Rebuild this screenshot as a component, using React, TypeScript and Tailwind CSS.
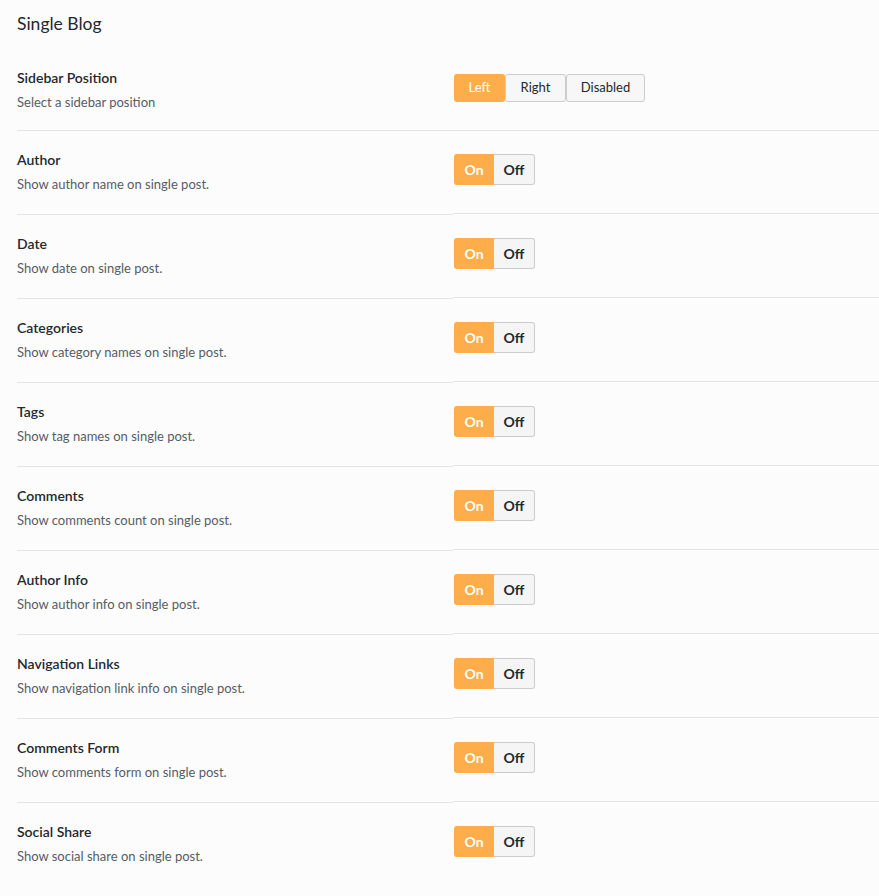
import React from "react";

const rows = [
  ["Author", "Show author name on single post."],
  ["Date", "Show date on single post."],
  ["Categories", "Show category names on single post."],
  ["Tags", "Show tag names on single post."],
  ["Comments", "Show comments count on single post."],
  ["Author Info", "Show author info on single post."],
  ["Navigation Links", "Show navigation link info on single post."],
  ["Comments Form", "Show comments form on single post."],
  ["Social Share", "Show social share on single post."],
];

function Label({ title, desc, last, first }: { title: string; desc: string; last?: boolean; first?: boolean }) {
  return (
    <div className={`w-[436px] ${first ? "h-[83px] pt-[20px]" : "h-[84px] pt-[19px]"} ${last ? "" : "border-b border-[#e5e5e5]"}`}>
      <div className="text-[14px] leading-[20px] font-semibold text-[#23282d]">{title}</div>
      <div className="text-[13px] leading-[20px] mt-[4px] text-[#555d66]">{desc}</div>
    </div>
  );
}

function Toggle() {
  return (
    <div className="flex h-[31px] text-[14px] font-bold">
      <div className="w-[40px] flex items-center justify-center bg-[#fdae4b] text-white rounded-l-[3px]">On</div>
      <div className="w-[41px] flex items-center justify-center bg-[#f5f5f5] text-[#23282d] border border-l-0 border-[#cccccc] rounded-r-[3px]">Off</div>
    </div>
  );
}

export default function App() {
  return (
    <div className="min-h-[896px] bg-[#fcfcfc] pl-[17px] pb-[20px]" style={{ fontFamily: 'Lato, "Noto Sans", sans-serif' }}>
      <div className="h-[48px] pt-[12px] text-[17.5px] leading-[24px] text-[#23282d]">Single Blog</div>
      <div className="flex items-start">
        <Label first title="Sidebar Position" desc="Select a sidebar position" />
        <div className="flex-1 h-[83px] border-b border-[#e5e5e5] pt-[26px] pl-[1px]">
          <div className="flex h-[28px] text-[13px]">
            <div className="w-[51px] flex items-center justify-center bg-[#fdae4b] text-white rounded-[3px]">Left</div>
            <div className="w-[61px] flex items-center justify-center bg-[#f7f7f7] text-[#23282d] border border-[#cccccc] rounded-[3px]">Right</div>
            <div className="w-[79px] flex items-center justify-center bg-[#f7f7f7] text-[#23282d] border border-[#cccccc] rounded-[3px]">Disabled</div>
          </div>
        </div>
      </div>
      {rows.map(([t, d], i) => {
        const last = i === rows.length - 1;
        return (
          <div key={t} className="flex items-start">
            <Label title={t} desc={d} last={last} />
            <div className={`flex-1 h-[83px] pt-[23px] pl-[1px] ${last ? "" : "border-b border-[#e5e5e5]"}`}>
              <Toggle />
            </div>
          </div>
        );
      })}
    </div>
  );
}
